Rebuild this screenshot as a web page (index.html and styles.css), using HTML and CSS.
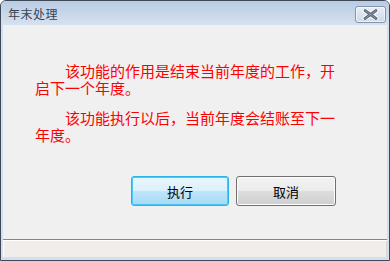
FILE: index.html
```html
<!DOCTYPE html>
<html lang="zh-CN">
<head>
  <meta charset="UTF-8">
  <title>年末处理</title>
  <link rel="stylesheet" href="styles.css">
</head>
<body>
  <div class="window">
    <div class="titlebar">
      <span class="title">年末处理</span>
      <button class="close-btn" title="关闭">
        <svg width="17" height="11" viewBox="0 0 17 11">
          <path d="M3 1.5 L14 9.5 M14 1.5 L3 9.5" stroke="#ffffff" stroke-width="4.8" stroke-linecap="round"/>
          <path d="M3 1.5 L14 9.5 M14 1.5 L3 9.5" stroke="#5a687c" stroke-width="2.8" stroke-linecap="round"/>
          <path d="M3 1.5 L14 9.5 M14 1.5 L3 9.5" stroke="#9aa6b5" stroke-width="0.8" stroke-linecap="round"/>
        </svg>
      </button>
    </div>

    <div class="content">
      <div class="message">
        <p>该功能的作用是结束当前年度的工作，开启下一个年度。</p>
        <p>该功能执行以后，当前年度会结账至下一年度。</p>
      </div>
      <div class="actions">
        <button class="btn btn-primary">执行</button>
        <button class="btn">取消</button>
      </div>
    </div>

    <div class="statusbar"></div>
  </div>
</body>
</html>
```

FILE: styles.css
```css
body {
  margin: 0;
  padding: 0;
  background-color: #ffffff;
  font-family: "Noto Sans CJK SC", "Noto Sans", sans-serif;
}
.window {
  width: 390px;
  height: 261px;
  box-sizing: border-box;
  border: 1px solid #3e4857;
  border-radius: 6px 6px 0 0;
  background-color: #d2dfee;
  padding: 0 2px 3px 2px;
  display: flex;
  flex-direction: column;
  overflow: hidden;
}
.titlebar {
  height: 24px;
  margin: 0 -2px;
  padding: 0 3px 0 7px;
  background: linear-gradient(to bottom, #b9cce3 0%, #c7d7ea 50%, #d5e1f0 100%);
  display: flex;
  align-items: center;
  justify-content: space-between;
}
.title {
  font-size: 12px;
  color: #3a4250;
  letter-spacing: 0.5px;
}
.close-btn {
  width: 31px;
  height: 17px;
  margin-top: 2px;
  padding: 0;
  border: 1px solid #8495ab;
  border-radius: 3px;
  background: linear-gradient(to bottom, #e9eff7 0%, #dbe4ef 50%, #cfdae8 100%);
  box-shadow: inset 0 0 0 1px rgba(255, 255, 255, 0.6);
  display: flex;
  align-items: center;
  justify-content: center;
}
.content {
  flex: 1;
  background-color: #f0f0f0;
  padding: 37px 0 0 32px;
}
.message {
  width: 300px;
  color: #ff0000;
  font-size: 15px;
  line-height: 17px;
}
.message p {
  margin: 0 0 13px 0;
  text-indent: 30px;
}
.actions {
  display: flex;
  gap: 7px;
  margin-top: 33px;
  padding-left: 96px;
}
.btn {
  width: 100px;
  height: 30px;
  font-family: "Noto Sans CJK SC", "Noto Sans", sans-serif;
  font-size: 13px;
  color: #000000;
  border: 1px solid #707070;
  border-radius: 3px;
  background: linear-gradient(to bottom, #f2f2f2 0%, #ebebeb 50%, #dddddd 51%, #cfcfcf 100%);
  box-shadow: inset 0 0 0 1px #fcfcfc;
  cursor: pointer;
}
.btn-primary {
  width: 98px;
  border: 1px solid #27b6ea;
  background: linear-gradient(to bottom, #eaf6fd 0%, #d9f0fc 50%, #bee6fd 51%, #a7d9f5 100%);
  box-shadow: inset 0 0 0 1px #48c8f5;
}
.statusbar {
  height: 17px;
  border-top: 1px solid #858585;
  background-color: #f0edeb;
  box-shadow: inset 1px 1px 0 #ffffff, inset -1px 0 0 #d9d6d4;
}
```
